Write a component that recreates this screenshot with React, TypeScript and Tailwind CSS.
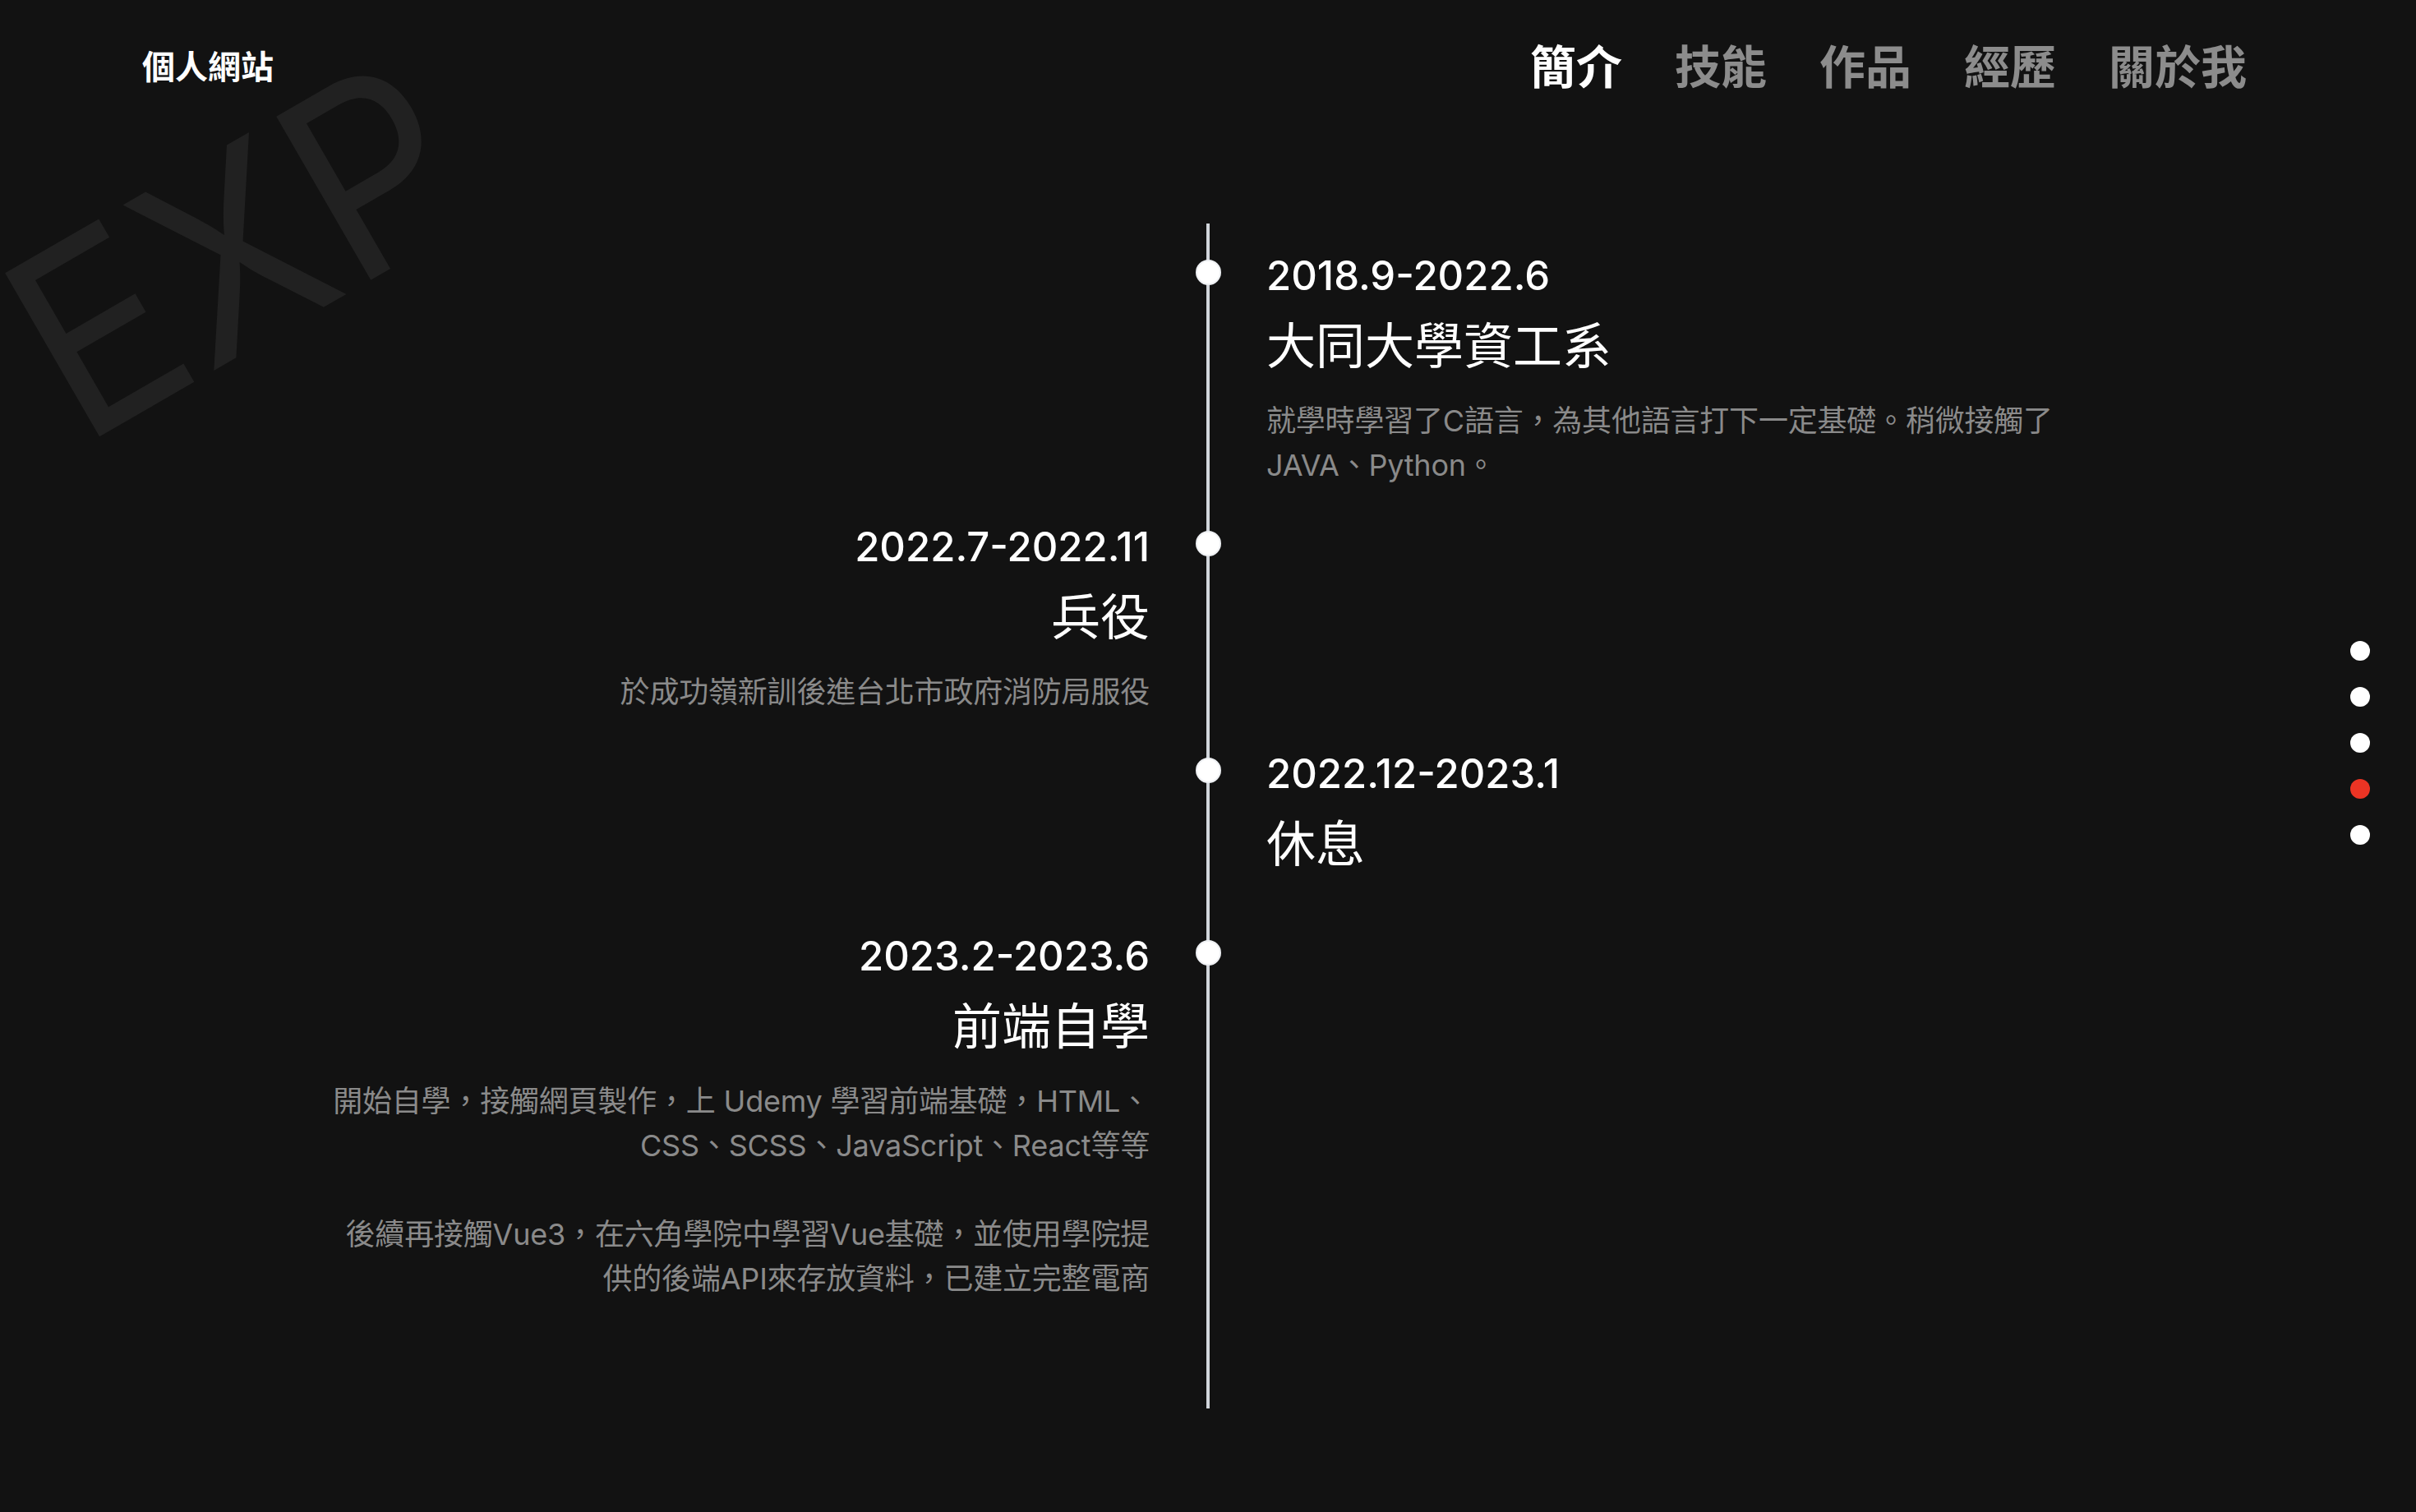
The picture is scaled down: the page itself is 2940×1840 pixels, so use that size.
import React from "react";

const FONT = "font-['Inter','Noto_Sans_CJK_TC',sans-serif]";

type Item = {
  side: "left" | "right";
  date: string;
  title: string;
  desc: React.ReactNode;
};

const items: Item[] = [
  {
    side: "right",
    date: "2018.9-2022.6",
    title: "大同大學資工系",
    desc: (
      <>
        就學時學習了C語言，為其他語言打下一定基礎。稍微接觸了
        <br />
        JAVA、Python。
      </>
    ),
  },
  {
    side: "left",
    date: "2022.7-2022.11",
    title: "兵役",
    desc: <>於成功嶺新訓後進台北市政府消防局服役</>,
  },
  {
    side: "right",
    date: "2022.12-2023.1",
    title: "休息",
    desc: null,
  },
  {
    side: "left",
    date: "2023.2-2023.6",
    title: "前端自學",
    desc: (
      <>
        開始自學，接觸網頁製作，上 Udemy 學習前端基礎，HTML、
        <br />
        CSS、SCSS、JavaScript、React等等
        <br />
        <br />
        後續再接觸Vue3，在六角學院中學習Vue基礎，並使用學院提
        <br />
        供的後端API來存放資料，已建立完整電商
      </>
    ),
  },
];

function Content({ item }: { item: Item }) {
  const align = item.side === "left" ? "text-right" : "text-left";
  return (
    <div className={`flex flex-col ${align}`}>
      <div className="h-[60px] text-[49px] leading-[60px] font-medium text-white">
        {item.date}
      </div>
      <div className="mt-[19px] text-[60px] leading-[72px] font-normal text-white">
        {item.title}
      </div>
      <p className="mt-[28px] text-[36px] leading-[54px] tracking-[-0.2px] text-[#8a8a8a]">
        {item.desc}
      </p>
    </div>
  );
}

export default function App() {
  return (
    <div
      className={`relative w-full h-[1840px] overflow-hidden bg-[#121212] ${FONT}`}
    >
      {/* watermark */}
      <div
        aria-hidden="true"
        className="absolute left-[-38px] top-[308px] origin-top-left -rotate-30 scale-x-[0.94] text-[316px] leading-none font-normal text-[#212121] select-none font-['Inter',sans-serif]"
      >
        EXP
      </div>

      {/* header */}
      <header className="relative flex h-[164px] items-center justify-between pl-[173px] pr-[206px]">
        <div className="text-[40px] font-bold text-white leading-none">個人網站</div>
        <nav className="flex items-center gap-[64px] text-[56px] font-bold leading-none">
          <span className="text-white">簡介</span>
          <span className="text-[#8c8c8c]">技能</span>
          <span className="text-[#8c8c8c]">作品</span>
          <span className="text-[#8c8c8c]">經歷</span>
          <span className="text-[#8c8c8c]">關於我</span>
        </nav>
      </header>

      {/* timeline */}
      <main className="relative mt-[108px] pt-[34px] pb-[131px]">
        <div className="absolute left-1/2 top-0 bottom-0 w-[4px] -translate-x-1/2 bg-[#d1d5db]" />
        <div className="relative flex flex-col gap-[43px]">
          {items.map((item, i) => (
            <div key={i} className="grid grid-cols-[1fr_142px_1fr]">
              <div>{item.side === "left" && <Content item={item} />}</div>
              <div className="flex justify-center">
                <div className="mt-[10px] h-[31px] w-[31px] rounded-full border-2 border-[#eef0f3] bg-white" />
              </div>
              <div>{item.side === "right" && <Content item={item} />}</div>
            </div>
          ))}
        </div>
      </main>

      {/* side dots */}
      <div className="fixed right-[56px] top-[780px] flex flex-col gap-[32px]">
        <span className="h-[24px] w-[24px] rounded-full bg-white" />
        <span className="h-[24px] w-[24px] rounded-full bg-white" />
        <span className="h-[24px] w-[24px] rounded-full bg-white" />
        <span className="h-[24px] w-[24px] rounded-full bg-[#eb3424]" />
        <span className="h-[24px] w-[24px] rounded-full bg-white" />
      </div>
    </div>
  );
}
